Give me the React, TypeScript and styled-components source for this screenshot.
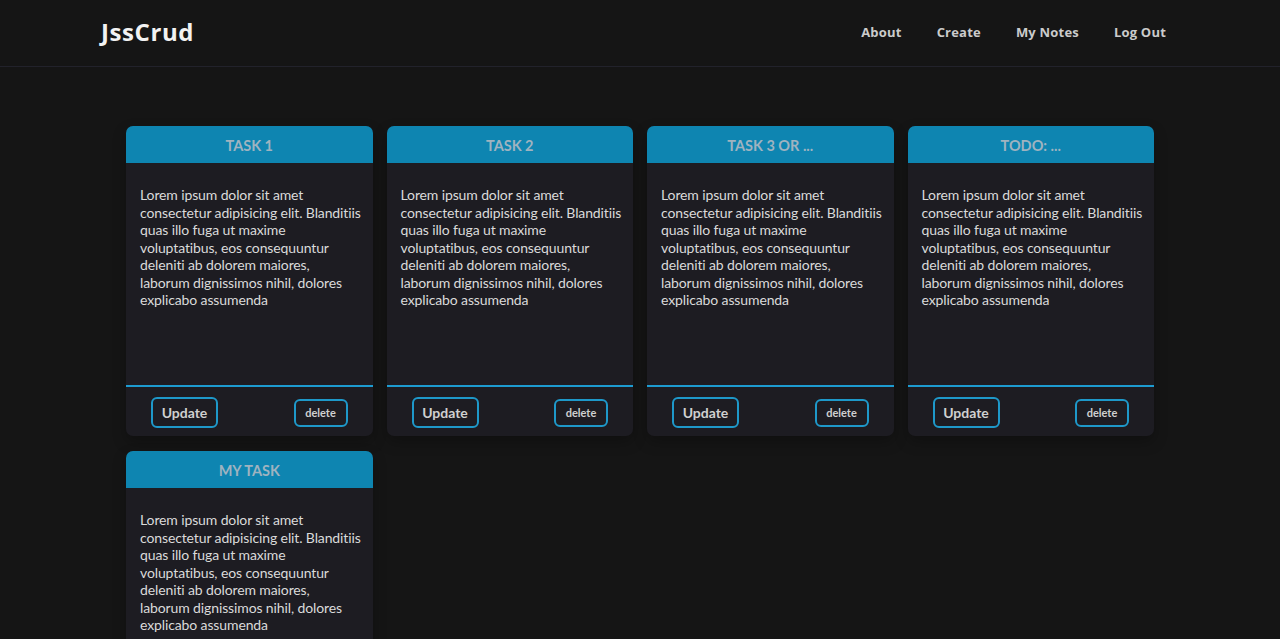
import React from "react";
import styled, { createGlobalStyle } from "styled-components";

const Global = createGlobalStyle`
  html, body { margin: 0; padding: 0; background: #151515; }
  body { font-family: Lato, "Noto Sans", sans-serif; color: #d4d4d4; }
  * { box-sizing: border-box; }
`;

const Header = styled.header`
  height: 67px;
  display: flex;
  align-items: center;
  justify-content: space-between;
  padding: 0 114px 3px 101px;
  border-bottom: 1px solid #22222b;
  background: #151515;
`;

const Logo = styled.div`
  font-family: "Open Sans", sans-serif;
  font-weight: 700;
  font-size: 24px;
  letter-spacing: 0.6px;
  color: #f2f2f2;
`;

const Nav = styled.nav`
  display: flex;
  gap: 35px;
`;

const NavLink = styled.a`
  font-family: "Open Sans", sans-serif;
  font-weight: 700;
  font-size: 13px;
  letter-spacing: 0.2px;
  color: #cbcbcb;
  text-decoration: none;
`;

const Grid = styled.main`
  width: 1028px;
  margin: 59px auto 0;
  display: grid;
  grid-template-columns: repeat(4, 1fr);
  column-gap: 14px;
  row-gap: 15px;
`;

const Card = styled.div`
  background: #1d1c22;
  border-radius: 7px;
  overflow: hidden;
  display: flex;
  flex-direction: column;
  box-shadow: 0 6px 14px rgba(0, 0, 0, 0.25);
`;

const CardHead = styled.div`
  height: 37px;
  padding-top: 2px;
  background: #0e85b1;
  display: flex;
  align-items: center;
  justify-content: center;
  font-weight: 700;
  font-size: 14.5px;
  color: #9fb3c0;
`;

const CardBody = styled.p`
  margin: 0;
  height: 222px;
  padding: 23px 11px 0 14px;
  font-size: 14px;
  line-height: 17.5px;
  color: #dadada;
  letter-spacing: -0.12px;
`;

const CardFoot = styled.div`
  border-top: 2px solid #1d9bd0;
  height: 51px;
  display: flex;
  align-items: center;
  justify-content: space-between;
  padding: 2px 25px 0;
`;

const Btn = styled.button<{ $small?: boolean }>`
  font-family: Lato, sans-serif;
  font-weight: 700;
  background: transparent;
  color: #d0d0d0;
  border: 2px solid #1e98c9;
  border-radius: 6px;
  width: ${(p) => (p.$small ? 54 : 67)}px;
  height: ${(p) => (p.$small ? 28 : 31)}px;
  font-size: ${(p) => (p.$small ? 11 : 14)}px;
  padding: 0;
  cursor: pointer;
`;

const lorem =
  "Lorem ipsum dolor sit amet consectetur adipisicing elit. Blanditiis quas illo fuga ut maxime voluptatibus, eos consequuntur deleniti ab dolorem maiores, laborum dignissimos nihil, dolores explicabo assumenda";

const tasks = ["TASK 1", "TASK 2", "TASK 3 OR ...", "TODO: ...", "MY TASK"];

export default function App() {
  return (
    <>
      <Global />
      <Header>
        <Logo>JssCrud</Logo>
        <Nav>
          <NavLink>About</NavLink>
          <NavLink>Create</NavLink>
          <NavLink>My Notes</NavLink>
          <NavLink>Log Out</NavLink>
        </Nav>
      </Header>
      <Grid>
        {tasks.map((t) => (
          <Card key={t}>
            <CardHead>{t}</CardHead>
            <CardBody>{lorem}</CardBody>
            <CardFoot>
              <Btn>Update</Btn>
              <Btn $small>delete</Btn>
            </CardFoot>
          </Card>
        ))}
      </Grid>
    </>
  );
}
